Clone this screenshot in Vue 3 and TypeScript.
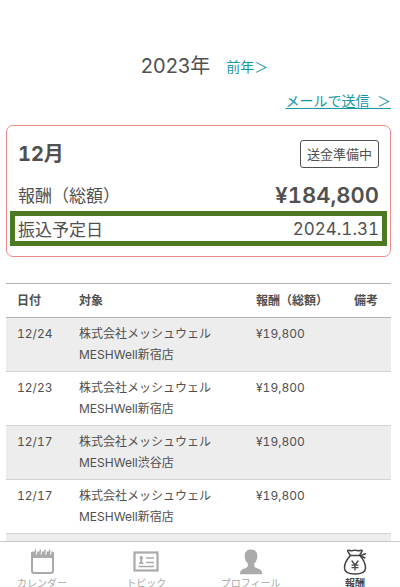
<script setup lang="ts">
import { ref } from 'vue'

interface Payment {
  date: string
  company: string
  shop: string
  amount: number
  note: string
}

interface Tab {
  id: 'calendar' | 'topic' | 'profile' | 'reward'
  label: string
}

const payments: Payment[] = [
  { date: '12/24', company: '株式会社メッシュウェル', shop: 'MESHWell新宿店', amount: 19800, note: '' },
  { date: '12/23', company: '株式会社メッシュウェル', shop: 'MESHWell新宿店', amount: 19800, note: '' },
  { date: '12/17', company: '株式会社メッシュウェル', shop: 'MESHWell渋谷店', amount: 19800, note: '' },
  { date: '12/17', company: '株式会社メッシュウェル', shop: 'MESHWell新宿店', amount: 19800, note: '' },
]

const tabs: Tab[] = [
  { id: 'calendar', label: 'カレンダー' },
  { id: 'topic', label: 'トピック' },
  { id: 'profile', label: 'プロフィール' },
  { id: 'reward', label: '報酬' },
]

const activeTab = ref<Tab['id']>('reward')

const yen = (value: number): string => '¥' + value.toLocaleString('en-US')
</script>

<template>
  <div class="app">
    <main class="content">
      <header class="year">
        <h1>2023年</h1>
        <a href="#previous">前年＞</a>
      </header>

      <p class="mail"><a href="#mail">メールで送信&nbsp;&nbsp;＞</a></p>

      <section class="card">
        <div class="row head">
          <h2>12月</h2>
          <span class="status">送金準備中</span>
        </div>
        <div class="row total">
          <span>報酬（総額）</span>
          <strong>{{ yen(184800) }}</strong>
        </div>
        <div class="row due">
          <span>振込予定日</span>
          <span>2024.1.31</span>
        </div>
      </section>

      <table class="payments">
        <thead>
          <tr>
            <th class="date" scope="col">日付</th>
            <th scope="col">対象</th>
            <th class="amount" scope="col">報酬（総額）</th>
            <th class="note" scope="col">備考</th>
          </tr>
        </thead>
        <tbody>
          <tr v-for="(p, i) in payments" :key="i">
            <td>{{ p.date }}</td>
            <td>{{ p.company }}<br />{{ p.shop }}</td>
            <td>{{ yen(p.amount) }}</td>
            <td>{{ p.note }}</td>
          </tr>
          <tr>
            <td colspan="4"></td>
          </tr>
        </tbody>
      </table>
    </main>

    <nav class="tabs">
      <button
        v-for="tab in tabs"
        :key="tab.id"
        type="button"
        :class="{ active: tab.id === activeTab }"
        @click="activeTab = tab.id"
      >
        <svg v-if="tab.id === 'calendar'" viewBox="0 0 26 26" aria-hidden="true">
          <path
            fill="currentColor"
            fill-rule="evenodd"
            d="M3.500 2.500h20a1.500 1.500 0 0 1 1.500 1.500v18a3 3 0 0 1-3 3h-17a3 3 0 0 1-3-3V4a1.500 1.500 0 0 1 1.500-1.500zM4 9v12.500a1.500 1.500 0 0 0 1.500 1.500h16a1.500 1.500 0 0 0 1.500-1.500V9z"
          />
          <path d="M7.200 1.500v3M11.900 1.500v3M16.600 1.500v3M21.300 1.500v3" stroke="#fff" stroke-width="2" stroke-linecap="round" />
          <path d="M6.500 1v3.200M11.200 1v3.200M15.900 1v3.200M20.600 1v3.200" stroke="currentColor" stroke-width="1.400" stroke-linecap="round" />
        </svg>
        <svg v-else-if="tab.id === 'topic'" viewBox="0 0 26 26" aria-hidden="true">
          <rect x="1.500" y="3.500" width="23" height="18" fill="none" stroke="currentColor" stroke-width="2.200" />
          <circle cx="8.300" cy="8.800" r="1.700" fill="currentColor" />
          <path d="M7.300 10h2v3.500h1.200v1.500H6v-1.500h1.300z" fill="currentColor" />
          <path d="M13 9h8M13 13.500h8M5.500 17.500h15.500" stroke="currentColor" stroke-width="1.500" />
        </svg>
        <svg v-else-if="tab.id === 'profile'" viewBox="0 0 26 26" aria-hidden="true">
          <path
            fill="currentColor"
            d="M13 .5c4 0 6.300 2.600 6.300 6.200 0 3.600-1.100 6.100-3 7.800v2.500c0 1.200 1 1.700 2.800 2.300 3.300 1.100 5.100 2.200 5.100 5.900H2c0-3.700 1.800-4.800 5.100-5.900C8.900 18.700 9.800 18.200 9.800 17v-2.500c-2-1.700-3.100-4.200-3.100-7.800C6.700 3.100 9 .5 13 .5z"
          />
        </svg>
        <svg v-else viewBox="0 0 26 26" aria-hidden="true">
          <g fill="none" stroke="currentColor" stroke-width="1.500" stroke-linecap="round" stroke-linejoin="round">
            <path d="M8 6L5.800 2.300Q5.300 1 6.800 1.200Q8.800 2 10.800 1.500Q13 1 15.200 1.500Q17.200 2 19 1.200Q20.500 1 20 2.300L17.800 6" />
            <path d="M8.500 6.600H18.500M8.500 6.600C5 10 2.500 14.500 2.500 19C2.500 23.300 5.500 25 13 25S23.500 23.300 23.500 19C23.500 14.500 21 10 17.800 6.600" />
            <path d="M18.500 6.600L23.500 4.800M18.500 6.600L22.800 9" />
            <path d="M10 12l3 4 3-4M13 16v5M10 16.200h6M10 18.600h6" stroke-width="1.300" />
          </g>
        </svg>
        <span>{{ tab.label }}</span>
      </button>
    </nav>
  </div>
</template>

<style>
body {
  margin: 0;
  background: #fff;
}
</style>

<style scoped>
.app {
  display: flex;
  flex-direction: column;
  height: 100vh;
  overflow: hidden;
  color: #505050;
  font-family: Inter, "Noto Sans CJK JP", sans-serif;
  font-variant-numeric: tabular-nums;
}

.content {
  flex: 1;
  min-height: 0;
  padding: 50px 9px 0 6px;
  overflow-y: auto;
  scrollbar-width: none;
}

h1,
h2,
p {
  margin: 0;
}

a {
  color: #1697a6;
  font-size: 14px;
  line-height: 24px;
}

.year {
  display: flex;
  justify-content: center;
  align-items: center;
  gap: 16px;
  height: 32px;
  padding-left: 12px;
}

.year h1 {
  font-size: 20px;
  font-weight: 400;
  font-variant-numeric: normal;
  line-height: 32px;
}

.year a {
  padding-top: 2px;
  text-decoration: none;
}

.mail {
  margin-top: 6px;
  line-height: 24px;
  text-align: right;
}

.mail a {
  text-underline-offset: 2px;
}

.card {
  margin-top: 12px;
  padding: 12px 3px 10px;
  border: 1px solid #f08a8a;
  border-radius: 7px;
}

.row {
  display: flex;
  justify-content: space-between;
  align-items: center;
  padding: 0 8px;
  font-size: 17px;
}

.head {
  height: 32px;
}

h2 {
  font-size: 20px;
  font-weight: 700;
  line-height: 28px;
}

.status {
  padding: 0 6px;
  border: 1px solid #505050;
  border-radius: 3px;
  font-size: 13px;
  line-height: 26px;
}

.total {
  box-sizing: border-box;
  height: 41px;
  padding-top: 8px;
}

.total strong {
  font-size: 22px;
  font-weight: 600;
}

.due {
  height: 25px;
  padding: 0 3px;
  border: 5px solid #4c7a23;
}

.payments {
  width: 100%;
  margin-top: 26px;
  border-collapse: collapse;
  table-layout: fixed;
  font-size: 12px;
  line-height: 21px;
}

th,
td {
  box-sizing: border-box;
  padding: 5px 0 6px 11px;
  text-align: left;
  vertical-align: top;
  white-space: nowrap;
}

th {
  padding: 6px 0 6px 11px;
  font-weight: 700;
  border-top: 1px solid #b4b4b4;
  border-bottom: 1px solid #b4b4b4;
}

td {
  border-bottom: 1px solid #d2d2d2;
}

tbody tr:nth-child(odd) {
  background: #ededed;
}

.date {
  width: 62px;
}

.amount {
  width: 98px;
}

.note {
  width: 48px;
}

.tabs {
  display: flex;
  flex: none;
  justify-content: space-between;
  align-items: flex-start;
  height: 45px;
  padding-right: 3px;
  overflow: hidden;
  border-top: 1px solid #c8c8c8;
  background: #fff;
}

.tabs button {
  display: flex;
  flex-direction: column;
  align-items: center;
  width: 84px;
  padding: 7px 0 0;
  border: 0;
  background: none;
  color: #aaa;
  font-family: inherit;
  font-size: 10px;
  line-height: 16px;
  white-space: nowrap;
}

.tabs button.active {
  color: #444;
  font-weight: 700;
}

.tabs svg {
  width: 26px;
  height: 26px;
}
</style>
